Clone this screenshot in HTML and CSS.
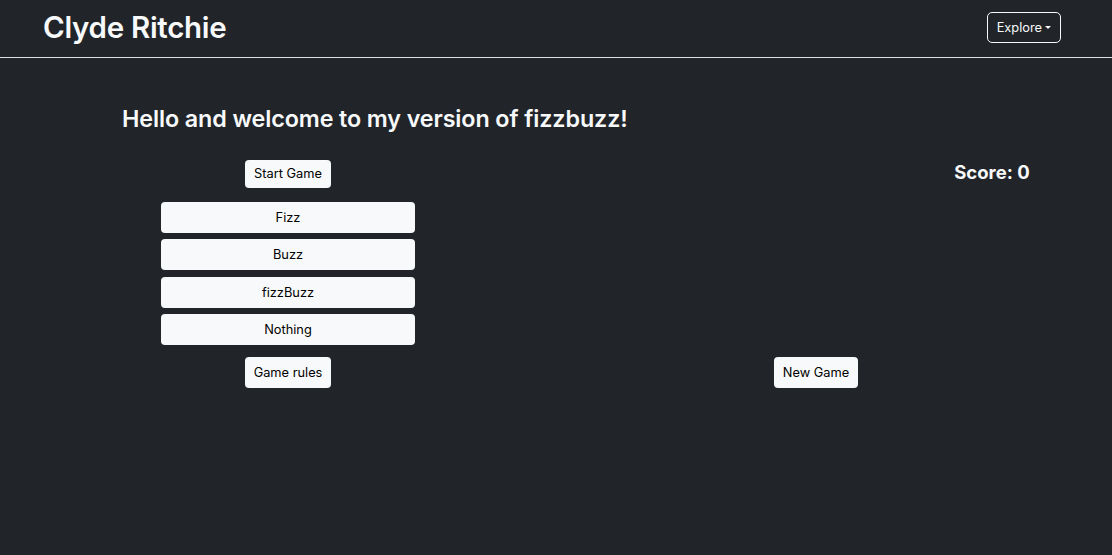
FILE: index.html
```html
<!DOCTYPE html>
<html lang="en">
<head>
<meta charset="utf-8">
<title>Clyde Ritchie</title>
<link rel="stylesheet" href="styles.css">
</head>
<body>
<header class="topbar">
  <h1 class="brand">Clyde Ritchie</h1>
  <button class="explore">Explore <span class="caret"></span></button>
</header>
<main class="content">
  <h3 class="welcome">Hello and welcome to my version of fizzbuzz!</h3>
  <div class="game">
    <div class="cell left"><button class="btn">Start Game</button></div>
    <div class="cell right score">Score: 0</div>
    <div class="cell left stack">
      <button class="btn wide">Fizz</button>
      <button class="btn wide">Buzz</button>
      <button class="btn wide">fizzBuzz</button>
      <button class="btn wide">Nothing</button>
    </div>
    <div class="cell left"><button class="btn tall">Game rules</button></div>
    <div class="cell mid"><button class="btn tall">New Game</button></div>
  </div>
</main>
</body>
</html>
```
FILE: styles.css
```css
* { box-sizing: border-box; }
html, body { margin: 0; height: 100%; }
body {
  background: #212529;
  color: #f8f9fa;
  font-family: Inter, "Noto Sans", sans-serif;
}
.topbar {
  display: flex;
  justify-content: space-between;
  align-items: center;
  height: 58px;
  padding: 0 51px 2px 43px;
  border-bottom: 1px solid #dee2e6;
}
.brand {
  margin: 0 0 2px;
  font-size: 29.5px;
  font-weight: 600;
  letter-spacing: -0.3px;
}
.explore {
  background: transparent;
  color: #f8f9fa;
  border: 1px solid #f8f9fa;
  border-radius: 5px;
  height: 31px;
  padding: 0 9px;
  font-family: inherit;
  font-size: 12.8px;
  display: flex;
  align-items: center;
  gap: 3px;
}
.caret {
  width: 0; height: 0;
  border-left: 3px solid transparent;
  border-right: 3px solid transparent;
  border-top: 3px solid #f8f9fa;
}
.content { padding: 0 0 0 122px; }
.welcome {
  margin: 47px 0 0;
  font-size: 23.3px;
  font-weight: 600;
  line-height: 1.2;
  letter-spacing: -0.1px;
}
.game {
  display: grid;
  grid-template-columns: 332px 246px 232px 120px;
  grid-template-rows: auto auto auto;
  row-gap: 12px;
  margin-top: 27px;
}
.cell { display: flex; justify-content: center; align-items: flex-start; }
.left { grid-column: 1; }
.mid { grid-column: 3; }
.right { grid-column: 4; }
.score {
  grid-row: 1;
  font-size: 18.5px;
  font-weight: 700;
  padding-top: 1px;
}
.stack { flex-direction: column; align-items: center; gap: 6px; margin-top: 2px; }
.btn {
  background: #f8f9fa;
  color: #000;
  border: none;
  border-radius: 4px;
  height: 28px;
  padding: 0 9px;
  font-family: inherit;
  font-size: 12.8px;
}
.btn.tall { height: 31px; }
.btn.wide { width: 254px; height: 31px; }
.stack .btn:nth-child(2) { margin-bottom: 1px; }
```
